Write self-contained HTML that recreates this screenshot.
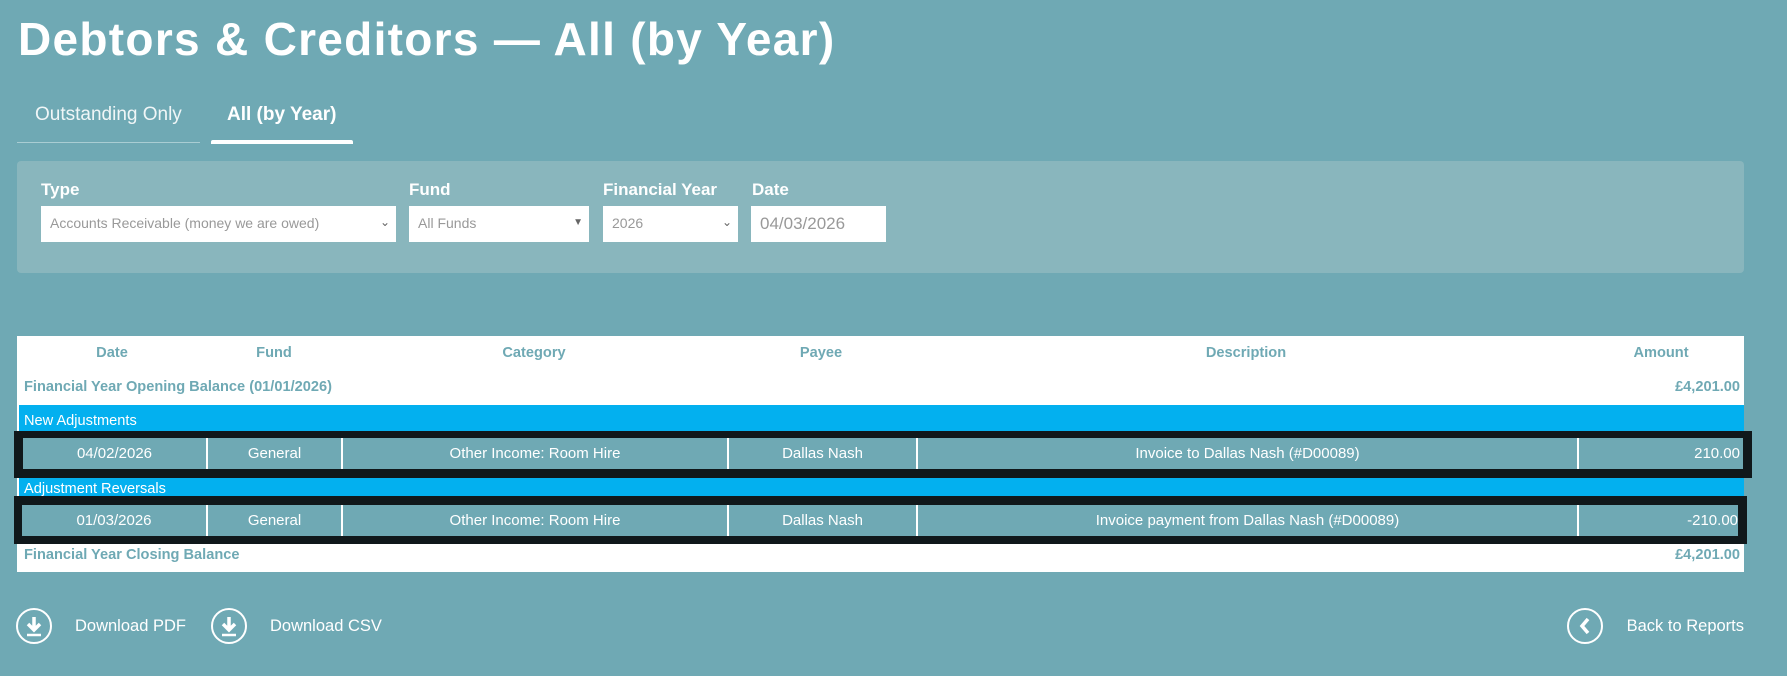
<!DOCTYPE html>
<html><head><meta charset="utf-8"><style>
*{box-sizing:border-box;margin:0;padding:0}
body{width:1787px;height:676px;background:#6fa9b4;font-family:"Liberation Sans",sans-serif;color:#fff;position:relative;overflow:hidden}
.a{position:absolute;white-space:nowrap}
h1{position:absolute;left:18px;top:12px;font-size:46px;font-weight:bold;letter-spacing:1.3px}
.lbl{font-size:17px;font-weight:bold;top:180px}
.inp{position:absolute;top:206px;height:36px;background:#fff;color:#999;font-size:15px;padding:9px 9px;}
.chev{position:absolute;right:6px;top:9px;color:#666;font-size:12px}
.th{color:#6fa9b4;font-size:14.6px;font-weight:bold;top:345px;transform:translateX(-50%)}
.bold{color:#6fa9b4;font-size:14.6px;font-weight:bold}
.bar{position:absolute;left:19px;width:1725px;background:#03b0ef;font-size:14.6px;padding-left:5px}
.box{position:absolute;background:#10181b}
.row{position:absolute;background:#6fa9b4;height:31px;font-size:15px}
.row div{position:absolute;top:0;height:31px;line-height:31px;text-align:center;border-right:2px solid #fff}
.ic{position:absolute;top:608px;width:36px;height:36px;border:2px solid #fff;border-radius:50%}
.bt{font-size:16.5px;top:617px}
</style></head><body>
<h1>Debtors &amp; Creditors — All (by Year)</h1>
<div class="a" style="left:35px;top:104px;font-size:19px;color:#f0f6f7">Outstanding Only</div>
<div class="a" style="left:227px;top:104px;font-size:19px;font-weight:bold">All (by Year)</div>
<div class="a" style="left:17px;top:142px;width:183px;height:1px;background:#a9cdd3"></div>
<div class="a" style="left:211px;top:140px;width:142px;height:4px;background:#fff;border-radius:2px 2px 0 0"></div>
<div class="a" style="left:17px;top:161px;width:1727px;height:112px;background:#89b6bd;border-radius:4px"></div>
<div class="a lbl" style="left:41px">Type</div>
<div class="a lbl" style="left:409px">Fund</div>
<div class="a lbl" style="left:603px">Financial Year</div>
<div class="a lbl" style="left:752px">Date</div>
<div class="inp" style="left:41px;width:355px;font-size:14px">Accounts Receivable (money we are owed)<span class="chev">&#8964;</span></div>
<div class="inp" style="left:409px;width:180px;font-size:14px">All Funds<span class="chev" style="font-size:10px;top:11px">&#9660;</span></div>
<div class="inp" style="left:603px;width:135px;font-size:14px">2026<span class="chev">&#8964;</span></div>
<div class="inp" style="left:751px;width:135px;font-size:17px;padding-top:8px">04/03/2026</div>
<div class="a" style="left:17px;top:336px;width:1727px;height:236px;background:#fff"></div>
<div class="a th" style="left:112px">Date</div>
<div class="a th" style="left:274px">Fund</div>
<div class="a th" style="left:534px">Category</div>
<div class="a th" style="left:821px">Payee</div>
<div class="a th" style="left:1246px">Description</div>
<div class="a th" style="left:1661px">Amount</div>
<div class="a bold" style="left:24px;top:379px">Financial Year Opening Balance (01/01/2026)</div>
<div class="a bold" style="right:47px;top:379px">£4,201.00</div>
<div class="bar" style="top:405px;height:26px;line-height:32px">New Adjustments</div>
<div class="box" style="left:14px;top:431px;width:1738px;height:47px"></div>
<div class="row" style="left:23px;top:438px;width:1720px">
<div style="left:0;width:185px">04/02/2026</div><div style="left:185px;width:135px">General</div><div style="left:320px;width:386px">Other Income: Room Hire</div><div style="left:706px;width:189px">Dallas Nash</div><div style="left:895px;width:661px">Invoice to Dallas Nash (#D00089)</div><div style="left:1556px;width:164px;border:0;text-align:right;padding-right:3px">210.00</div></div>
<div class="bar" style="top:478px;height:18px;line-height:22px">Adjustment Reversals</div>
<div class="box" style="left:14px;top:496px;width:1733px;height:48px"></div>
<div class="row" style="left:22px;top:505px;width:1716px">
<div style="left:0;width:186px">01/03/2026</div><div style="left:186px;width:135px">General</div><div style="left:321px;width:386px">Other Income: Room Hire</div><div style="left:707px;width:189px">Dallas Nash</div><div style="left:896px;width:661px">Invoice payment from Dallas Nash (#D00089)</div><div style="left:1557px;width:159px;border:0;text-align:right;padding-right:0">-210.00</div></div>
<div class="a bold" style="left:24px;top:547px">Financial Year Closing Balance</div>
<div class="a bold" style="right:47px;top:547px">£4,201.00</div>
<div class="ic" style="left:16px"><svg width="32" height="32" viewBox="0 0 32 32"><path d="M16 7v13M10 14l6 6 6-6" stroke="#fff" stroke-width="3.5" fill="none"/><path d="M9 25h14" stroke="#fff" stroke-width="2.5"/></svg></div>
<div class="a bt" style="left:75px">Download PDF</div>
<div class="ic" style="left:211px"><svg width="32" height="32" viewBox="0 0 32 32"><path d="M16 7v13M10 14l6 6 6-6" stroke="#fff" stroke-width="3.5" fill="none"/><path d="M9 25h14" stroke="#fff" stroke-width="2.5"/></svg></div>
<div class="a bt" style="left:270px">Download CSV</div>
<div class="ic" style="left:1567px"><svg width="32" height="32" viewBox="0 0 32 32"><path d="M19 9l-6 7 6 7" stroke="#fff" stroke-width="3.5" fill="none"/></svg></div>
<div class="a bt" style="right:43px">Back to Reports</div>
</body></html>
